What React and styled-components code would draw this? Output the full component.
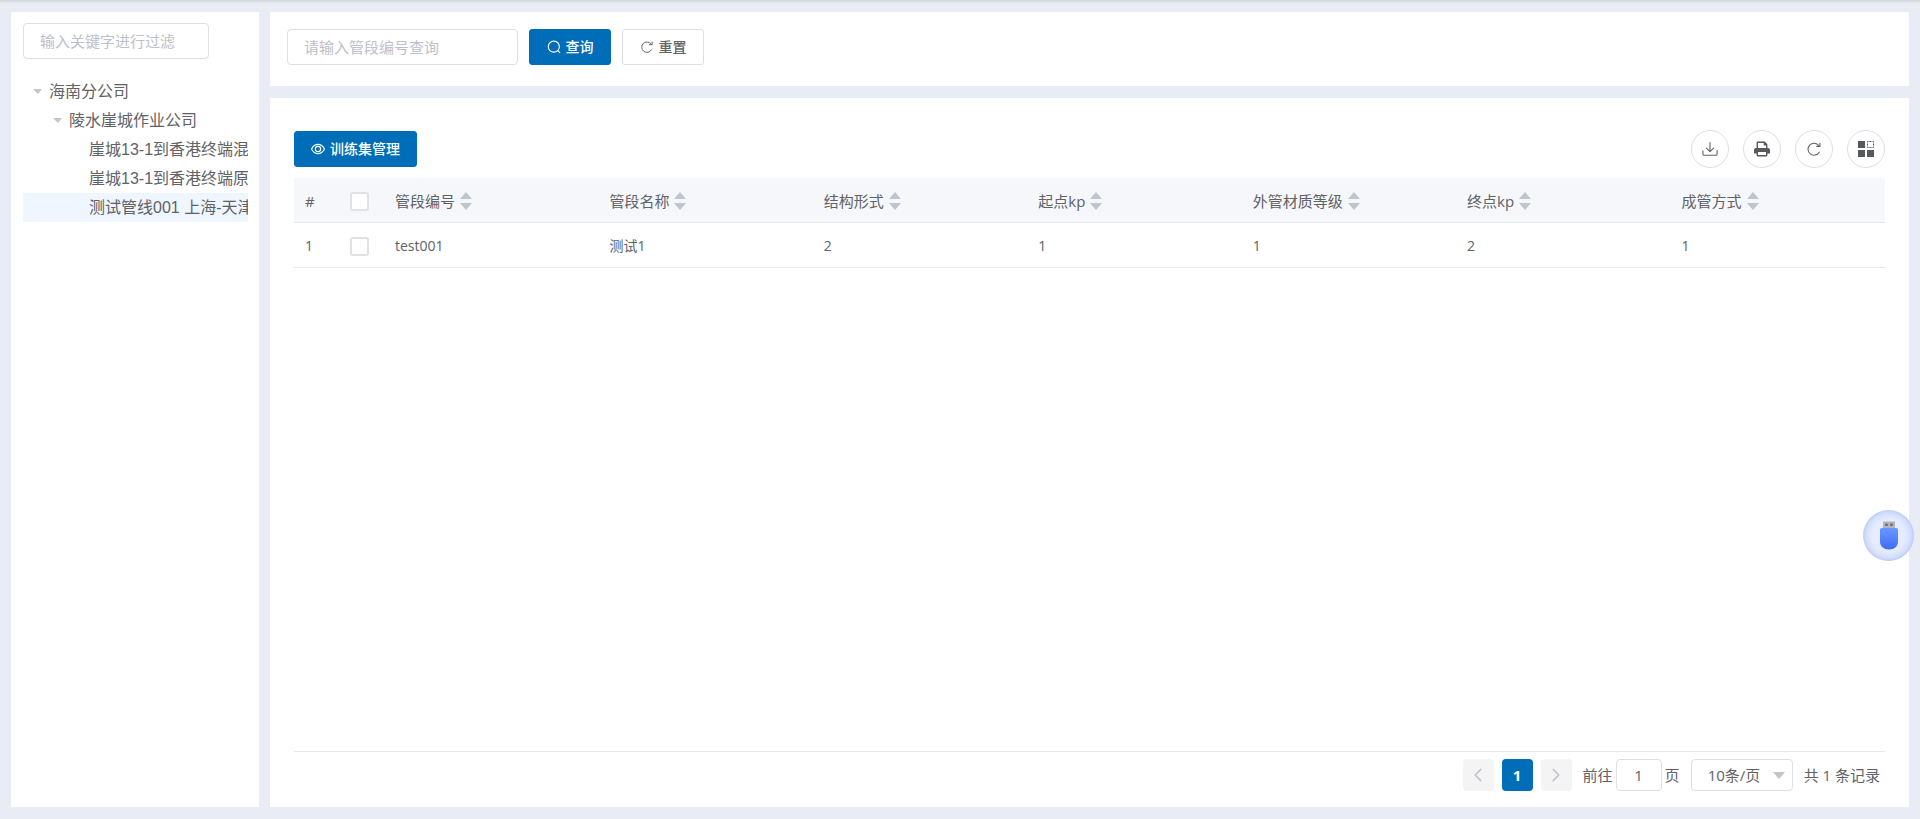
import React from "react";
import styled, { createGlobalStyle } from "styled-components";

const sans = `"Open Sans", "Noto Sans CJK SC", sans-serif`;
const arial = `"Liberation Sans", "Noto Sans CJK SC", sans-serif`;

const GlobalStyle = createGlobalStyle`
  *, *::before, *::after { box-sizing: border-box; }
  body { margin: 0; background: #e9ecf5; color: #606266; font: 15px/20px ${sans}; }
  button, input, select { font: inherit; color: inherit; margin: 0; }
  button { cursor: pointer; }
  svg { display: block; flex: none; }
`;

const Page = styled.div`
  display: flex;
  gap: 11px;
  min-height: 100vh;
  padding: 12px 11px;
  box-shadow: inset 0 3px 2px -1px #d3d6dd;
`;

const Sidebar = styled.aside`
  flex: none;
  width: 248px;
  padding: 11px 11px 11px 12px;
  background: #fff;
  overflow: hidden;
`;

const Main = styled.main`
  flex: 1;
  min-width: 0;
  display: flex;
  flex-direction: column;
  gap: 12px;
`;

const TextInput = styled.input`
  width: ${(p) => p.$width}px;
  height: 36px;
  padding: 0 16px;
  border: 1px solid #dcdfe6;
  border-radius: 4px;
  background: #fff;
  outline: none;
  &::placeholder { color: #bcc0c9; opacity: 1; }
`;

const Tree = styled.ul`
  list-style: none;
  margin: 18px 0 0;
  padding: 0;
  font: 16px/29px ${arial};
`;

const TreeRow = styled.li`
  display: flex;
  align-items: center;
  gap: 7px;
  height: 29px;
  padding-left: ${(p) => 10 + p.$level * 20}px;
  background: ${(p) => (p.$selected ? "#eff6ff" : "transparent")};
  white-space: nowrap;
  overflow: hidden;
`;

const Caret = styled.span`
  flex: none;
  width: 9px;
  border: solid transparent;
  border-width: 5px 4px 0 5px;
  border-top-color: ${(p) => (p.$hidden ? "transparent" : "#c0c4cc")};
`;

const SearchCard = styled.form`
  display: flex;
  gap: 11px;
  height: 74px;
  padding: 17px;
  background: #fff;
`;

const Button = styled.button`
  display: inline-flex;
  align-items: center;
  justify-content: center;
  gap: 5px;
  min-width: 82px;
  height: 36px;
  padding: 0 16px;
  border: 1px solid ${(p) => (p.$primary ? "#006db8" : "#dcdfe6")};
  border-radius: 3px;
  background: ${(p) => (p.$primary ? "#006db8" : "#fff")};
  color: ${(p) => (p.$primary ? "#fff" : "#606266")};
  font-size: 14px;
  font-weight: 500;
  white-space: nowrap;
`;

const TableCard = styled.section`
  flex: 1;
  display: flex;
  flex-direction: column;
  padding: 32px 24px 16px;
  background: #fff;
`;

const Toolbar = styled.div`
  display: flex;
  align-items: center;
  justify-content: space-between;
  margin-bottom: 10px;
`;

const Tools = styled.div`
  display: flex;
  gap: 14px;
`;

const RoundButton = styled.button`
  display: grid;
  place-items: center;
  width: 38px;
  height: 38px;
  padding: 0;
  border: 1px solid #dcdfe6;
  border-radius: 50%;
  background: #fff;
`;

const Table = styled.table`
  width: 100%;
  table-layout: fixed;
  border-collapse: separate;
  border-spacing: 0;
`;

const Th = styled.th`
  width: ${(p) => p.$width || "auto"};
  height: 45px;
  padding: 2px 11px 0;
  background: #f5f7fa;
  border-bottom: 1px solid #e6e8ee;
  text-align: left;
  font-weight: 400;
`;

const Td = styled.td`
  height: 45px;
  padding: 2px 11px 0;
  border-bottom: 1px solid #e6e8ee;
  font-size: 14px;
`;

const Sortable = styled.button`
  display: flex;
  align-items: center;
  gap: 5px;
  padding: 0;
  border: 0;
  background: none;
  white-space: nowrap;
`;

const Checkbox = styled.input.attrs({ type: "checkbox" })`
  appearance: none;
  display: block;
  width: 19px;
  height: 19px;
  border: 2px solid #dfe1e6;
  border-radius: 3px;
  background: #fff;
`;

const Pager = styled.nav`
  display: flex;
  align-items: center;
  justify-content: flex-end;
  gap: 11px;
  margin-top: auto;
  padding: 7px 5px 0 0;
  border-top: 1px solid #e6e8ee;
  white-space: nowrap;
`;

const Pages = styled.div`
  display: flex;
  gap: 8px;
`;

const PageButton = styled.button`
  display: grid;
  place-items: center;
  width: 31px;
  height: 32px;
  padding: 0;
  border: 0;
  border-radius: 4px;
  background: ${(p) => (p.$current ? "#006db8" : "#f4f4f5")};
  color: ${(p) => (p.$current ? "#fff" : "#c0c4cc")};
  font-weight: 700;
`;

const Jump = styled.label`
  display: flex;
  align-items: center;
  gap: 3px;
`;

const JumpInput = styled.input`
  width: 46px;
  height: 32px;
  padding: 0;
  border: 1px solid #dcdfe6;
  border-radius: 4px;
  text-align: center;
  outline: none;
`;

const SizeBox = styled.div`
  display: grid;
  align-items: center;
  width: 102px;
  > * { grid-area: 1 / 1; }
  > svg { justify-self: end; margin-right: 8px; pointer-events: none; }
`;

const SizeSelect = styled.select`
  appearance: none;
  width: 100%;
  height: 32px;
  padding: 0 16px;
  border: 1px solid #dcdfe6;
  border-radius: 4px;
  background: #fff;
`;

const FloatingBall = styled.button`
  position: fixed;
  right: 6px;
  top: calc(50vh + 100px);
  display: grid;
  place-items: center;
  width: 51px;
  height: 51px;
  padding: 0;
  border: 0;
  border-radius: 50%;
  background: radial-gradient(circle, #e6ecfe 0 45%, #d3defc 62%, #b9c9f7 72%);
`;

const Stroke = ({ size, width = 1, children }) => (
  <svg width={size} height={size} viewBox="0 0 16 16" fill="none" stroke="currentColor" strokeWidth={width} strokeLinecap="round" strokeLinejoin="round" aria-hidden="true">
    {children}
  </svg>
);

const SearchIcon = () => (
  <Stroke size={14} width={1.3}>
    <circle cx="7.8" cy="7.6" r="6.3" />
    <path d="M12.4 12.2 14.6 14.5" />
  </Stroke>
);

const RefreshIcon = ({ size }) => (
  <Stroke size={size} width={1.1}>
    <path d="M13.2 11.2A6 6 0 1 1 12.9 4.7" />
    <path d="M13.9 2.2V5.4H10.7" />
  </Stroke>
);

const EyeIcon = () => (
  <Stroke size={14} width={1.3}>
    <path d="M.6 8C2.4 4.400 5 2.700 8 2.700S13.600 4.400 15.400 8C13.600 11.600 11 13.300 8 13.300S2.400 11.600.6 8Z" />
    <circle cx="8" cy="8" r="3" />
  </Stroke>
);

const DownloadIcon = () => (
  <Stroke size={16} width={1.1}>
    <path d="M8 1.500V10.500M4.300 7.200 8 10.700 11.700 7.200" />
    <path d="M.9 9.800V13a1.300 1.300 0 0 0 1.300 1.300H13.800A1.300 1.300 0 0 0 15.100 13V9.800" />
  </Stroke>
);

const PrintIcon = () => (
  <svg width="16" height="16" viewBox="0 0 16 16" aria-hidden="true">
    <path fill="#55585d" fillRule="evenodd" d="M2.600 1.800C2.600 1.100 3.100.6 3.800.6H10.800L13.400 3.200V7H14a2 2 0 0 1 2 2v3.600H13.400V14.200c0 .7-.5 1.200-1.200 1.200H3.800c-.7 0-1.200-.5-1.200-1.200V12.600H0V9a2 2 0 0 1 2-2h.6ZM4 2V7h8V4.400H9.700V2ZM4 11v2.900h8V11Z" />
  </svg>
);

const GridIcon = () => (
  <svg width="16" height="16" viewBox="0 0 16 16" aria-hidden="true">
    <path fill="#55585d" d="M0 0h7v7H0zM0 9h7v7H0zM9 9h7v7H9z" />
    <rect x="9.500" y=".5" width="6" height="6" fill="none" stroke="#55585d" strokeDasharray="2 1" strokeDashoffset="1" />
  </svg>
);

const SortIcon = () => (
  <svg width="12" height="18" viewBox="0 0 12 18" fill="#c0c4cc" aria-hidden="true">
    <path d="M6 0 12 7H0ZM6 18 0 11H12Z" />
  </svg>
);

const Chevron = ({ d }) => (
  <Stroke size={18} width={1.500}>
    <path d={d} />
  </Stroke>
);

const UsbIcon = () => (
  <svg width="22" height="30" viewBox="0 0 22 30" aria-hidden="true">
    <defs>
      <linearGradient id="usbBody" x1="0" y1="0" x2="0" y2="1">
        <stop offset="0" stopColor="#6b97ff" />
        <stop offset="1" stopColor="#3f6cf2" />
      </linearGradient>
    </defs>
    <path d="M5 1.500h12v8H5z" fill="#b3b4ba" />
    <path d="M7.200 3.500h2.500v2.500H7.200zM12.300 3.500h2.500v2.500h-2.500z" fill="#6c6d73" />
    <path d="M2 9.500q0-1.500 1.500-1.500H18.500q1.500 0 1.500 1.500V21.500q0 4-3 6.200-2 1.800-6 1.800t-6-1.800Q2 25.500 2 21.500Z" fill="url(#usbBody)" />
  </svg>
);

const nodes = [
  { label: "海南分公司", level: 0 },
  { label: "陵水崖城作业公司", level: 1 },
  { label: "崖城13-1到香港终端混", level: 2, leaf: true },
  { label: "崖城13-1到香港终端原", level: 2, leaf: true },
  { label: "测试管线001 上海-天津", level: 2, leaf: true, selected: true },
];

const columns = ["管段编号", "管段名称", "结构形式", "起点kp", "外管材质等级", "终点kp", "成管方式"];
const rows = [["test001", "测试1", "2", "1", "1", "2", "1"]];

export default function App() {
  return (
    <>
      <GlobalStyle />
      <Page>
        <Sidebar>
          <TextInput $width={186} placeholder="输入关键字进行过滤" aria-label="输入关键字进行过滤" />
          <Tree>
            {nodes.map((n) => (
              <TreeRow key={n.label} $level={n.level} $selected={n.selected}>
                <Caret $hidden={n.leaf} />
                {n.label}
              </TreeRow>
            ))}
          </Tree>
        </Sidebar>
        <Main>
          <SearchCard onSubmit={(e) => e.preventDefault()}>
            <TextInput $width={231} placeholder="请输入管段编号查询" aria-label="管段编号" />
            <Button $primary type="submit"><SearchIcon />查询</Button>
            <Button type="reset"><RefreshIcon size={14} />重置</Button>
          </SearchCard>
          <TableCard>
            <Toolbar>
              <Button $primary type="button"><EyeIcon />训练集管理</Button>
              <Tools>
                <RoundButton type="button" aria-label="导出"><DownloadIcon /></RoundButton>
                <RoundButton type="button" aria-label="打印"><PrintIcon /></RoundButton>
                <RoundButton type="button" aria-label="刷新"><RefreshIcon size={16} /></RoundButton>
                <RoundButton type="button" aria-label="列设置"><GridIcon /></RoundButton>
              </Tools>
            </Toolbar>
            <Table>
              <thead>
                <tr>
                  <Th $width="45px">#</Th>
                  <Th $width="45px"><Checkbox aria-label="全选" /></Th>
                  {columns.map((c) => (
                    <Th key={c}><Sortable type="button">{c}<SortIcon /></Sortable></Th>
                  ))}
                </tr>
              </thead>
              <tbody>
                {rows.map((row, i) => (
                  <tr key={row[0]}>
                    <Td>{i + 1}</Td>
                    <Td><Checkbox aria-label={`选择 ${row[0]}`} /></Td>
                    {row.map((cell, j) => <Td key={columns[j]}>{cell}</Td>)}
                  </tr>
                ))}
              </tbody>
            </Table>
            <Pager aria-label="分页">
              <Pages>
                <PageButton type="button" aria-label="上一页"><Chevron d="M10.500 3 5.500 8l5 5" /></PageButton>
                <PageButton type="button" $current>1</PageButton>
                <PageButton type="button" aria-label="下一页"><Chevron d="M5.500 3l5 5-5 5" /></PageButton>
              </Pages>
              <Jump>前往<JumpInput defaultValue="1" aria-label="页码" />页</Jump>
              <SizeBox>
                <SizeSelect aria-label="每页条数"><option>10条/页</option></SizeSelect>
                <svg width="12" height="7" viewBox="0 0 12 7" aria-hidden="true"><path d="M0 0h12L6 7Z" fill="#c0c4cc" /></svg>
              </SizeBox>
              <span>共 1 条记录</span>
            </Pager>
          </TableCard>
        </Main>
      </Page>
      <FloatingBall type="button" aria-label="U盘"><UsbIcon /></FloatingBall>
    </>
  );
}
